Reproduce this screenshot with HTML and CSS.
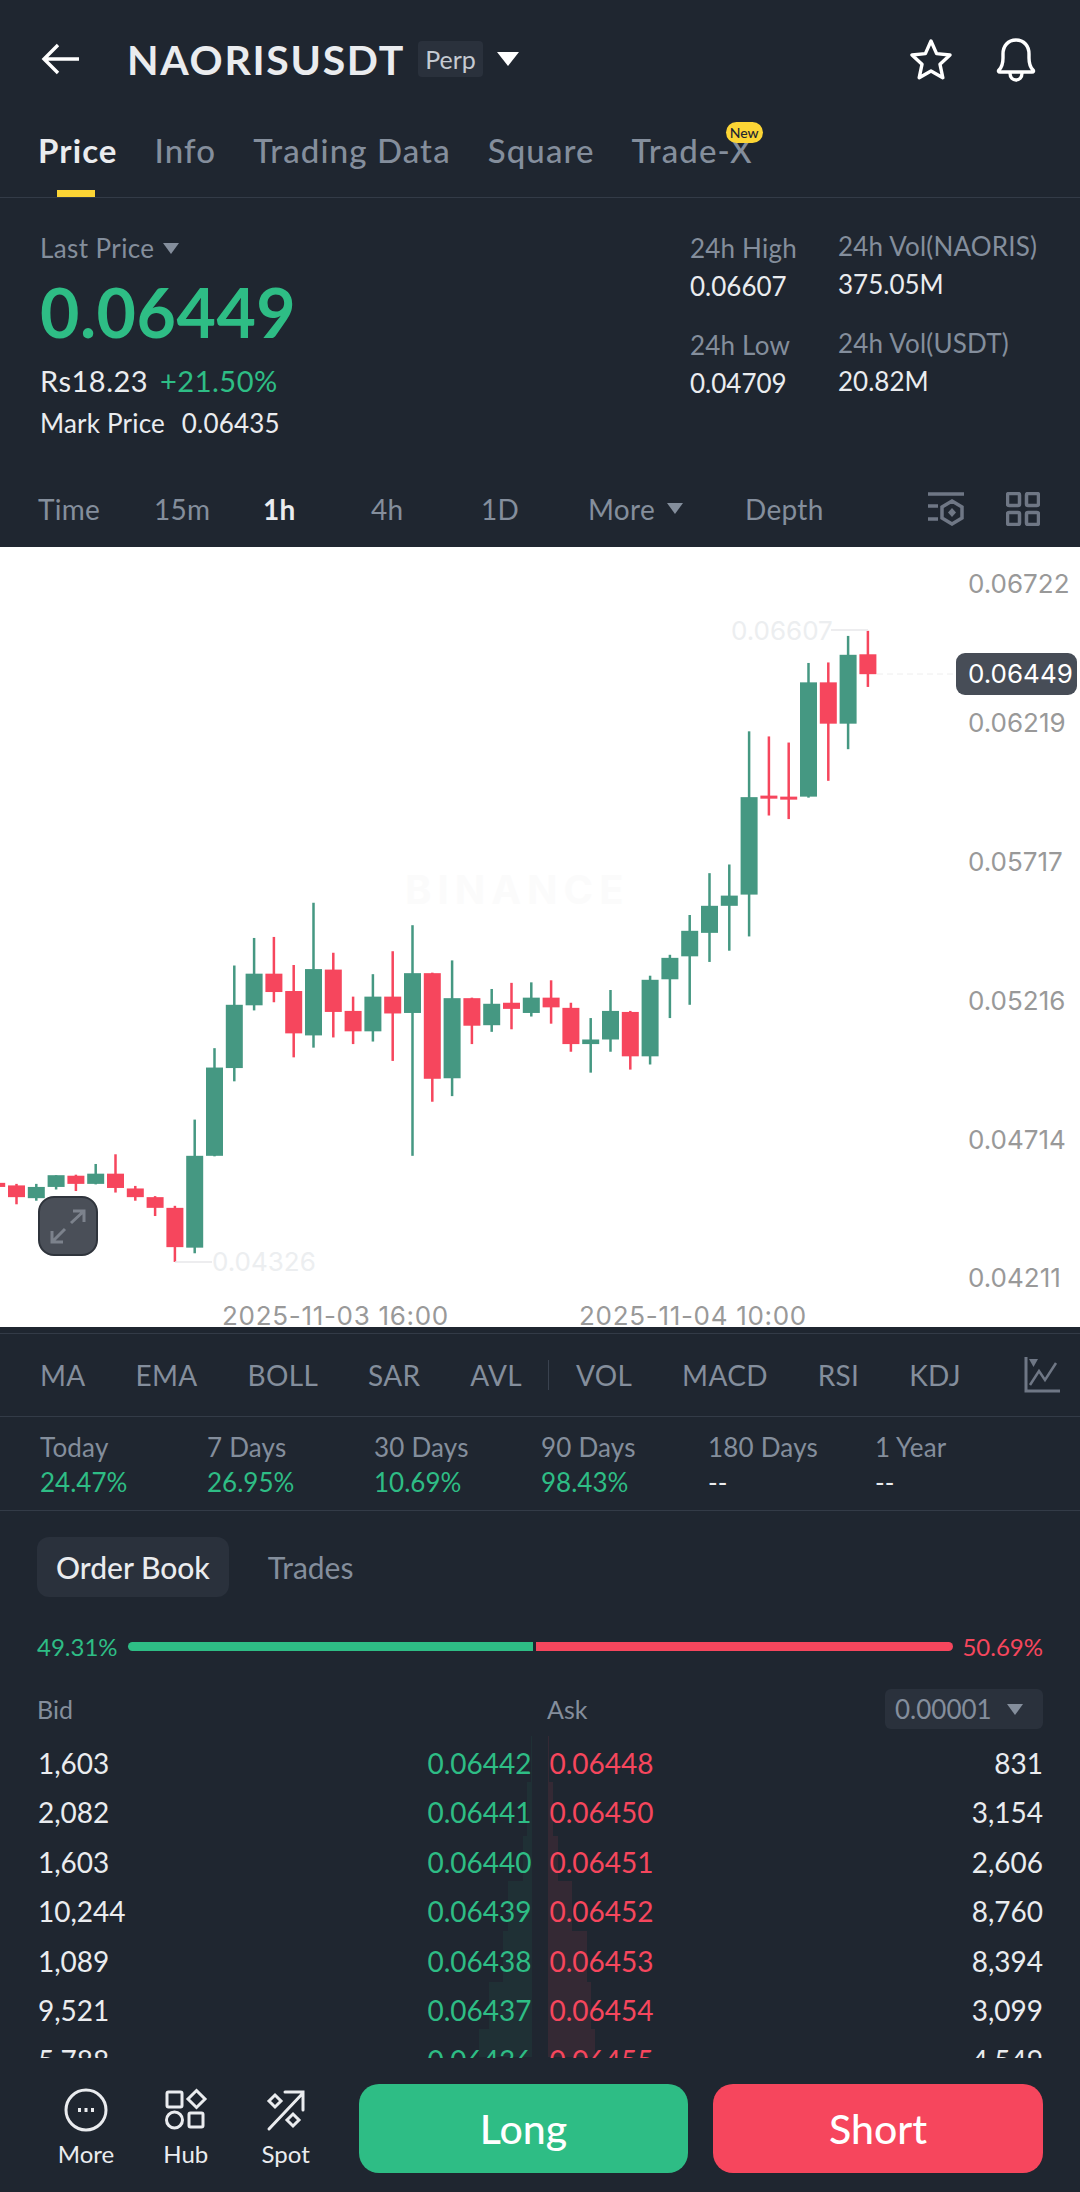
FILE: index.html
```html
<!DOCTYPE html>
<html lang="en">
<head>
<meta charset="utf-8">
<title>NAORISUSDT</title>
<link rel="stylesheet" href="styles.css">
</head>
<body>
<div class="app">
  <header class="topbar">
    <svg class="back" viewBox="0 0 40 32" width="40" height="32"><path d="M38 16H3M17 2 3 16l14 14"/></svg>
    <h1 class="symbol">NAORISUSDT</h1>
    <span class="perp">Perp</span>
    <span class="tri tri-white"></span>
    <svg class="star" viewBox="0 0 44 42" width="44" height="42"><path d="M22 3l5.6 12.6 13.4 1.4-10 9.3 2.8 13.4L22 33l-11.8 6.7L13 26.3 3 17l13.4-1.4z"/></svg>
    <svg class="bell" viewBox="0 0 44 46" width="44" height="46"><path d="M5 34c3-3 4-6 4-12V18C9 10 14 4 22 4s13 6 13 14v4c0 6 1 9 4 12 1 1 .5 2-1 2H6c-1.500 0-2-1-1-2z"/><path d="M16 37c0 5 3 7 6 7s6-2 6-7"/></svg>
  </header>

  <nav class="tabs">
    <a class="tab active">Price</a>
    <a class="tab">Info</a>
    <a class="tab">Trading Data</a>
    <a class="tab">Square</a>
    <a class="tab tab-new">Trade-X<span class="new">New</span></a>
  </nav>

  <section class="stats">
    <div class="stats-left">
      <div class="last">Last Price <span class="tri tri-grey"></span></div>
      <div class="price">0.06449</div>
      <div class="fiat">Rs18.23 <span class="pct">+21.50%</span></div>
      <div class="mark">Mark Price <span class="mark-val">0.06435</span></div>
    </div>
    <div class="stats-right">
      <div class="cell"><div class="lbl">24h High</div><div class="val">0.06607</div></div>
      <div class="cell vol"><div class="lbl">24h Vol(NAORIS)</div><div class="val">375.05M</div></div>
      <div class="cell"><div class="lbl">24h Low</div><div class="val">0.04709</div></div>
      <div class="cell vol"><div class="lbl">24h Vol(USDT)</div><div class="val">20.82M</div></div>
    </div>
  </section>

  <div class="intervals">
    <span>Time</span>
    <span>15m</span>
    <span class="on">1h</span>
    <span>4h</span>
    <span>1D</span>
    <span class="more">More <i class="tri tri-grey"></i></span>
    <span>Depth</span>
    <svg class="ico-a" viewBox="0 0 36 34" width="36" height="34"><path d="M0 2h36M0 14h10M0 27h10"/><path d="M24 9l10 6v11l-10 6-10-6V15z"/><path class="fill" d="M24 16l4 4.500-4 4.500-4-4.500z"/></svg>
    <svg class="ico-b" viewBox="0 0 34 34" width="34" height="34"><rect x="1.500" y="1.500" width="12" height="12" rx="1.500"/><rect x="20.500" y="1.500" width="12" height="12" rx="1.500"/><rect x="1.500" y="20.500" width="12" height="12" rx="1.500"/><rect x="20.500" y="20.500" width="12" height="12" rx="1.500"/></svg>
  </div>

  <div class="chart">
    <svg id="chart" class="chart-svg" viewBox="0 547 1080 780" width="1080" height="780">
      <text class="wm" x="405" y="904">BINANCE</text>
      <g id="candles"></g>
      <path class="lead" d="M831 630H868M175 1262H212"/>
      <path class="dash" d="M877 674H956"/>
      <text class="ghost" x="731" y="640">0.06607</text>
      <text class="ghost" x="212" y="1271">0.04326</text>
      <text class="axis" x="968" y="593">0.06722</text>
      <text class="axis" x="968" y="732">0.06219</text>
      <text class="axis" x="968" y="871">0.05717</text>
      <text class="axis" x="968" y="1010">0.05216</text>
      <text class="axis" x="968" y="1149">0.04714</text>
      <text class="axis" x="968" y="1287">0.04211</text>
      <rect class="tag" x="956" y="653" width="121" height="42" rx="9"/>
      <text class="tag-text" x="968" y="683">0.06449</text>
      <text class="axis date" x="222" y="1325">2025-11-03 16:00</text>
      <text class="axis date" x="579" y="1325">2025-11-04 10:00</text>
      <rect class="expand" x="39" y="1197" width="58" height="58" rx="15"/>
      <path class="expand-arrow" d="M71 1223l13-12M73 1211h11v11M65 1229l-13 13M52 1231v11h11"/>
    </svg>
  </div>

  <div class="indicators">
    <span>MA</span><span>EMA</span><span>BOLL</span><span>SAR</span><span>AVL</span>
    <i class="sep"></i>
    <span>VOL</span><span>MACD</span><span>RSI</span><span>KDJ</span>
    <svg class="ico-c" viewBox="0 0 36 36" width="36" height="36"><path d="M2 0v34h34"/><path class="thin" d="M6 28l9-14 6 9 11-17"/><path class="fill" d="M5 2h9l-4.500 8z"/></svg>
  </div>

  <div class="periods">
    <div><div class="lbl">Today</div><div class="gain">24.47%</div></div>
    <div><div class="lbl">7 Days</div><div class="gain">26.95%</div></div>
    <div><div class="lbl">30 Days</div><div class="gain">10.69%</div></div>
    <div><div class="lbl">90 Days</div><div class="gain">98.43%</div></div>
    <div><div class="lbl">180 Days</div><div class="none">--</div></div>
    <div><div class="lbl">1 Year</div><div class="none">--</div></div>
  </div>

  <section class="book">
    <div class="book-tabs">
      <span class="book-tab on">Order Book</span>
      <span class="book-tab">Trades</span>
    </div>
    <div class="ratio">
      <span class="r-bid">49.31%</span>
      <div class="bar"><i class="bar-g"></i><i class="bar-r"></i></div>
      <span class="r-ask">50.69%</span>
    </div>
    <div class="book-head">
      <span class="h-bid">Bid</span>
      <span class="h-ask">Ask</span>
      <span class="step">0.00001 <i class="tri tri-grey"></i></span>
    </div>
    <div class="rows">
      <svg class="depth" viewBox="0 0 1080 322" width="1080" height="322">
        <path class="d-g" d="M532 0V321H479V293H489V246H503V195H508V145H523V100H527V46H531V0z"/>
        <path class="d-r" d="M548 0V321H595V293H591V246H587V195H572V145H558V100H553V46H549V0z"/>
      </svg>
      <div class="row"><span class="q">1,603</span><span class="bp">0.06442</span><span class="ap">0.06448</span><span class="q qr">831</span></div>
      <div class="row"><span class="q">2,082</span><span class="bp">0.06441</span><span class="ap">0.06450</span><span class="q qr">3,154</span></div>
      <div class="row"><span class="q">1,603</span><span class="bp">0.06440</span><span class="ap">0.06451</span><span class="q qr">2,606</span></div>
      <div class="row"><span class="q">10,244</span><span class="bp">0.06439</span><span class="ap">0.06452</span><span class="q qr">8,760</span></div>
      <div class="row"><span class="q">1,089</span><span class="bp">0.06438</span><span class="ap">0.06453</span><span class="q qr">8,394</span></div>
      <div class="row"><span class="q">9,521</span><span class="bp">0.06437</span><span class="ap">0.06454</span><span class="q qr">3,099</span></div>
      <div class="row"><span class="q">5,788</span><span class="bp">0.06436</span><span class="ap">0.06455</span><span class="q qr">4,549</span></div>
    </div>
  </section>

  <footer class="actions">
    <div class="act act-more">
      <svg viewBox="0 0 44 44" width="44" height="44"><circle cx="22" cy="22" r="20"/><path class="dots" d="M14 22h3M20.500 22h3M27 22h3"/></svg>
      <span>More</span>
    </div>
    <div class="act act-hub">
      <svg viewBox="0 0 44 44" width="44" height="44"><rect x="3" y="4" width="15" height="15" rx="1.500"/><path d="M32.500 2.500l8.500 8.500-8.500 8.500-8.500-8.500z"/><circle cx="10.500" cy="32" r="8"/><rect x="25" y="25" width="14" height="14" rx="1.500"/></svg>
      <span>Hub</span>
    </div>
    <div class="act act-spot">
      <svg viewBox="0 0 44 44" width="44" height="44"><path d="M5 41L39 5M21 4h18v18"/><path d="M11 7l6 6-6 6-6-6zM29 26l6 6-6 6-6-6z"/></svg>
      <span>Spot</span>
    </div>
    <button class="btn long">Long</button>
    <button class="btn short">Short</button>
  </footer>
</div>
<script src="chart.js"></script>
</body>
</html>
```

FILE: styles.css
```css
* { box-sizing: border-box; }
html, body { margin: 0; padding: 0; }
body { background: #1f2630; font-family: Lato, "Open Sans", sans-serif; color: #eaecef; }
.app { width: 1080px; height: 2192px; overflow: hidden; background: #1f2630; }
svg { display: block; flex: none; }

.tri { display: inline-block; width: 0; height: 0; border-style: solid; border-color: transparent; border-width: 11px 8px 0; }
.tri-white { border-top-color: #fff; border-width: 14px 11px 0; }
.tri-grey { border-top-color: #848e9c; }

.topbar { height: 118px; display: flex; align-items: center; padding: 0 0 0 41px; }
.back { fill: none; stroke: #fff; stroke-width: 3.400; margin-right: 46px; }
.symbol { margin: 0 13px 0 0; font-size: 41px; font-weight: 700; line-height: 1; letter-spacing: 1.700px; color: #eaecef; }
.perp { width: 65px; height: 36px; background: #2a313c; border-radius: 4px; text-align: center; font-size: 25px; line-height: 36px; color: #c5cad2; margin-right: 14px; }
.star { fill: none; stroke: #fff; stroke-width: 3.400; stroke-linejoin: round; margin-left: 390px; }
.bell { fill: none; stroke: #fff; stroke-width: 3.400; stroke-linecap: round; margin-left: 41px; }

.tabs { height: 80px; padding: 0 0 0 38px; display: flex; gap: 37px; border-bottom: 1px solid #333b47; }
.tab { position: relative; height: 79px; padding-top: 12px; font-size: 33px; line-height: 40px; letter-spacing: 1.100px; color: #848e9c; font-weight: 500; }
.tab.active { color: #eaecef; font-weight: 700; }
.tab.active::after { content: ""; position: absolute; left: 19px; bottom: 0; width: 38px; height: 7px; background: #fcd535; }
.new { position: absolute; left: 94px; top: 4px; width: 37px; height: 21px; border-radius: 11px; background: #fcd535; color: #1f2630; font-size: 14px; line-height: 21px; letter-spacing: 0; text-align: center; }

.stats { height: 272px; display: flex; justify-content: space-between; padding: 35px 0 0 40px; }
.last { font-size: 26px; line-height: 30px; letter-spacing: .4px; color: #848e9c; display: flex; align-items: center; gap: 8px; }
.price { font-size: 68px; line-height: 70px; font-weight: 700; letter-spacing: .5px; color: #2ebd85; margin-top: 14px; }
.fiat { font-size: 29px; line-height: 36px; letter-spacing: .5px; margin-top: 16px; color: #eaecef; }
.pct { color: #2ebd85; margin-left: 4px; }
.mark { font-size: 26px; line-height: 32px; letter-spacing: .2px; margin-top: 8px; color: #eaecef; }
.mark-val { margin-left: 10px; }
.stats-right { width: 390px; display: grid; grid-template-columns: 147px 243px; grid-auto-rows: min-content; row-gap: 29px; }
.lbl { font-size: 26px; line-height: 30px; letter-spacing: .2px; color: #848e9c; }
.val { font-size: 26px; line-height: 30px; margin-top: 8px; color: #eaecef; }
.vol { margin-top: -2px; margin-left: 1px; }

.intervals { height: 77px; display: grid; grid-template-columns: 116px 109px 108px 110px 107px 157px 183px 78px 34px; align-items: center; padding-left: 38px; font-size: 28px; letter-spacing: .3px; color: #848e9c; }
.intervals .on { color: #eaecef; font-weight: 700; }
.more { display: flex; align-items: center; gap: 12px; }
.ico-a, .ico-b { fill: none; stroke: #6f7785; stroke-width: 3.500; }
.ico-a .fill, .ico-c .fill { fill: #6f7785; stroke: none; }

.chart { height: 780px; background: #fff; }
.chart-svg text { font-family: Inter, "DejaVu Sans", sans-serif; }
.up { fill: #459882; }
.down { fill: #f6465d; }
.wm { font-size: 40px; font-weight: 700; fill: #fbfbfb; letter-spacing: 6px; }
.lead { stroke: #e8e8ea; stroke-width: 1.500; fill: none; }
.dash { stroke: #eee; stroke-width: 1; stroke-dasharray: 6 4; fill: none; }
.ghost { font-size: 26px; fill: #eceef0; }
.axis { font-size: 26px; fill: #999; }
.date { letter-spacing: .7px; }
.tag { fill: #474d57; }
.tag-text { font-size: 26px; fill: #fff; }
.expand { fill: #4a4f58; stroke: #2f343c; stroke-width: 2; }
.expand-arrow { fill: none; stroke: #7c828c; stroke-width: 3; }

.indicators { margin-top: 6px; height: 84px; border-top: 1px solid #333b47; border-bottom: 1px solid #333b47; display: flex; align-items: center; gap: 50px; padding: 0 20px 0 40px; font-size: 28px; letter-spacing: .3px; color: #848e9c; }
.sep { width: 1px; height: 30px; background: #3a424f; margin: 0 -23px 0 -24px; }
.ico-c { fill: none; stroke: #6f7785; stroke-width: 3; margin-left: auto; }
.ico-c .thin { stroke-width: 2.500; }

.periods { height: 94px; border-bottom: 1px solid #333b47; display: grid; grid-template-columns: repeat(6, 167px); padding: 15px 0 0 40px; }
.gain, .none { font-size: 26px; line-height: 30px; margin-top: 5px; }
.gain { color: #2ebd85; }
.none { color: #eaecef; }

.book { position: relative; }
.book-tabs { display: flex; align-items: center; padding: 26px 0 0 37px; }
.book-tab { height: 60px; padding: 0 19px; border-radius: 12px; font-size: 30px; line-height: 60px; color: #848e9c; margin-right: 20px; }
.book-tab.on { background: #2a313c; color: #eaecef; font-weight: 500; margin-right: 20px; }
.ratio { display: flex; align-items: center; height: 30px; margin-top: 34px; padding: 0 37px; font-size: 24px; justify-content: space-between; }
.r-bid { color: #2ebd85; }
.r-ask { color: #f6465d; }
.bar { width: 825px; height: 9px; display: flex; gap: 3px; }
.bar-g { width: 405px; background: #2ebd85; border-radius: 5px 0 0 5px; }
.bar-r { flex: 1; background: #f6465d; border-radius: 0 5px 5px 0; }
.book-head { display: flex; align-items: center; height: 40px; margin-top: 28px; padding: 0 37px; font-size: 25px; color: #848e9c; }
.h-bid { width: 510px; }
.step { margin-left: auto; width: 158px; height: 40px; background: #2a313c; border-radius: 6px; padding-left: 10px; display: flex; align-items: center; gap: 15px; font-size: 26px; }
.rows { position: relative; height: 322px; margin-top: 7px; overflow: hidden; }
.depth { position: absolute; left: 0; top: 0; }
.d-g { fill: #2ebd85; opacity: .07; }
.d-r { fill: #f6465d; opacity: .1; }
.row { position: relative; display: flex; align-items: center; height: 49.500px; font-size: 28px; padding: 0 37px 0 38px; top: 2px; }
.q { flex: 1; color: #eaecef; }
.qr { text-align: right; }
.bp { width: 105px; margin-right: 18px; color: #2ebd85; text-align: right; }
.ap { width: 105px; color: #f6465d; }

.actions { height: 134px; display: flex; align-items: flex-start; padding: 26px 37px 0 0; position: relative; }
.act { display: flex; flex-direction: column; align-items: center; font-size: 24px; line-height: 30px; color: #eaecef; margin-top: 4px; }
.act svg { fill: none; stroke: #eaecef; stroke-width: 3; stroke-linecap: round; margin-bottom: 7px; }
.act .dots { stroke-width: 4; stroke-linecap: butt; }
.act-more { width: 100px; margin-left: 36px; }
.act-hub { width: 100px; }
.act-spot { width: 100px; }
.btn { border: 0; height: 89px; border-radius: 20px; font-family: inherit; font-size: 41px; font-weight: 500; color: #fff; width: 330px; padding: 0; }
.long { background: #2ebd85; margin-left: 23px; }
.short { background: #f6465d; margin-left: 25px; }
```

FILE: chart.js
```javascript
// Candles traced from the chart: [direction, wickTop, wickBottom, bodyTop, bodyBottom] in page-scale units.
var raw = [
  ['d',1258,1272,1260,1268],['d',1262,1302,1265,1288],['u',1262,1295,1268,1290],['u',1245,1273,1245,1268],
  ['d',1244,1276,1246,1262],['u',1223,1263,1242,1262],['d',1204,1279,1242,1270],['d',1266,1295,1271,1288],
  ['d',1286,1325,1288,1309],['d',1305,1415,1309,1386],['u',1136,1398,1207,1387],['u',996,1208,1034,1207],
  ['u',834,1061,911,1035],['u',780,922,850,912],['d',778,906,850,886],['d',833,1014,884,967],
  ['u',711,995,841,971],['d',809,975,842,925],['d',895,988,923,963],['u',851,983,895,963],
  ['d',806,1021,895,928],['u',755,1207,849,927],['d',848,1101,849,1056],['u',824,1090,898,1055],
  ['d',897,988,898,952],['u',880,964,909,951],['d',868,959,907,919],['u',867,934,897,927],
  ['d',863,948,897,916],['d',907,1003,917,988],['u',937,1044,979,988],['u',882,1003,923,979],
  ['d',923,1038,925,1012],['u',854,1028,862,1012],['u',813,937,819,861],['u',735,911,766,816],
  ['u',653,827,717,770],['u',636,805,697,717],['u',375,777,504,695],['d',385,540,501,507],
  ['d',397,547,503,508],['u',241,505,279,503],['d',240,472,279,360],['u',188,410,225,360],
  ['d',178,288,224,263]
];
var NS = 'http://www.w3.org/2000/svg';
var group = document.getElementById('candles');
function rect(x, y, w, h, cls) {
  var r = document.createElementNS(NS, 'rect');
  r.setAttribute('x', x); r.setAttribute('y', y);
  r.setAttribute('width', w); r.setAttribute('height', h);
  r.setAttribute('class', cls);
  group.appendChild(r);
}
function py(v) { return 540 + v / 1.96; }
raw.forEach(function (c, i) {
  var cx = -3.3 + i * 19.8;
  var cls = c[0] === 'u' ? 'up' : 'down';
  rect(cx - 1.25, py(c[1]), 2.5, py(c[2]) - py(c[1]), cls);
  rect(cx - 8.5, py(c[3]), 17, Math.max(py(c[4]) - py(c[3]), 3), cls);
});
```
